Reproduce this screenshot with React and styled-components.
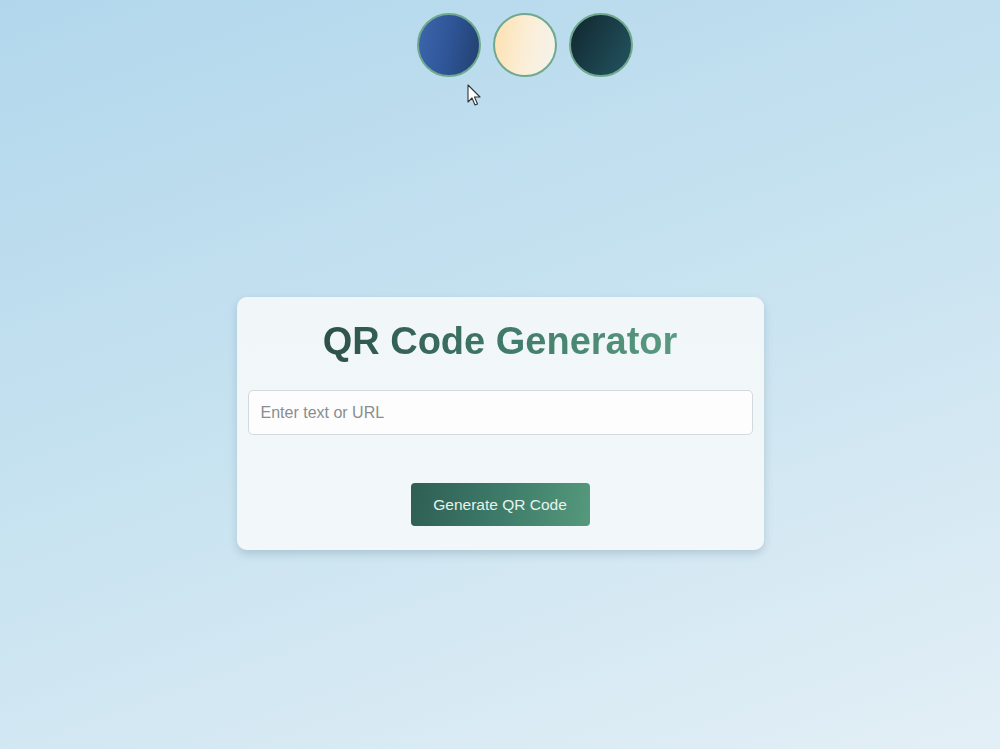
import React from "react";
import styled, { createGlobalStyle } from "styled-components";

const Global = createGlobalStyle`
  html, body { margin: 0; padding: 0; height: 100%; }
  body {
    font-family: "Liberation Sans", Arial, sans-serif;
    background: linear-gradient(160deg, #b2d7ec 0%, #c6e2f0 45%, #e3eff6 100%);
    min-height: 749px;
    overflow: hidden;
  }
`;

const Page = styled.div`
  position: relative;
  width: 1000px;
  height: 749px;
  display: flex;
  flex-direction: column;
  align-items: center;
`;

const Swatches = styled.div`
  display: flex;
  gap: 12px;
  margin-top: 13px;
  margin-left: 49px;
`;

const Swatch = styled.button`
  width: 64px;
  height: 64px;
  border-radius: 50%;
  border: 2px solid #6fa88e;
  padding: 0;
  background: ${(p) => p.$bg};
  cursor: pointer;
`;

const Card = styled.div`
  margin-top: 220px;
  width: 527px;
  height: 253px;
  box-sizing: border-box;
  padding: 20px 11px 0;
  background: linear-gradient(180deg, #f1f6f9 0%, #f2f7fa 100%);
  border-radius: 10px;
  box-shadow: 0 4px 8px rgba(60, 90, 110, 0.22);
  display: flex;
  flex-direction: column;
  align-items: center;
`;

const Title = styled.h1`
  margin: 0;
  font-family: "Liberation Sans", Arial, sans-serif;
  font-weight: 700;
  font-size: 38px;
  line-height: 49px;
  background: linear-gradient(90deg, #2d5049 0%, #3f7a66 50%, #5a9a82 100%);
  -webkit-background-clip: text;
  background-clip: text;
  color: transparent;
`;

const Input = styled.input`
  margin-top: 24px;
  width: 100%;
  height: 45px;
  box-sizing: border-box;
  border: 1px solid #d3dadd;
  border-radius: 5px;
  background: #fdfdfd;
  padding: 0 12px;
  font-family: "Liberation Sans", Arial, sans-serif;
  font-size: 16px;
  color: #333;
  outline: none;
  &::placeholder { color: #8a8d8f; }
`;

const Button = styled.button`
  margin-top: 48px;
  width: 179px;
  height: 43px;
  border: none;
  border-radius: 4px;
  background: linear-gradient(100deg, #2f5e54 0%, #3d7b68 50%, #56997d 100%);
  color: #e8f2ee;
  font-family: "Liberation Sans", Arial, sans-serif;
  font-size: 15.5px;
  cursor: pointer;
`;

const Cursor = styled.svg`
  position: absolute;
  left: 467px;
  top: 84px;
  width: 16px;
  height: 24px;
  pointer-events: none;
`;

export default function App() {
  return (
    <Page>
      <Global />
      <Swatches>
        <Swatch $bg="linear-gradient(100deg, #3d66ad 0%, #2f5597 50%, #22406f 100%)" />
        <Swatch $bg="linear-gradient(100deg, #fde0ae 0%, #fbeed6 50%, #f4f3ee 100%)" />
        <Swatch $bg="linear-gradient(120deg, #10262d 0%, #1a3e48 50%, #235461 100%)" />
      </Swatches>
      <Card>
        <Title>QR Code Generator</Title>
        <Input placeholder="Enter text or URL" />
        <Button>Generate QR Code</Button>
      </Card>
      <Cursor viewBox="0 0 16 24">
        <path d="M1 1 L1 18 L5 14 L8 21 L10.5 20 L7.5 13 L13 13 Z" fill="#fff" stroke="#333" strokeWidth="1.1" strokeLinejoin="round" />
      </Cursor>
    </Page>
  );
}
